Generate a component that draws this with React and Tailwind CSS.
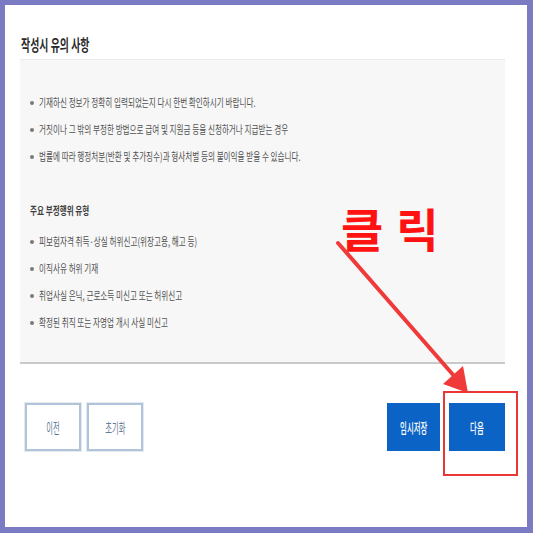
const font = { fontFamily: '"Noto Sans CJK KR", "Noto Sans", sans-serif' };

const notices = [
  '기재하신 정보가 정확히 입력되었는지 다시 한번 확인하시기 바랍니다.',
  '거짓이나 그 밖의 부정한 방법으로 급여 및 지원금 등을 신청하거나 지급받는 경우',
  '법률에 따라 행정처분(반환 및 추가징수)과 형사처벌 등의 불이익을 받을 수 있습니다.',
];

const types = [
  '피보험자격 취득·상실 허위신고(위장고용, 해고 등)',
  '이직사유 허위 기재',
  '취업사실 은닉, 근로소득 미신고 또는 허위신고',
  '확정된 취직 또는 자영업 개시 사실 미신고',
];

function Bullet({ text }) {
  return (
    <li className="flex h-[27px] items-center gap-[5px]">
      <span className="h-[4px] w-[4px] shrink-0 rounded-full bg-[#7a7a7a]" />
      <span className="inline-block origin-left scale-x-[0.69] whitespace-nowrap text-[11px] leading-none text-[#505050]">
        {text}
      </span>
    </li>
  );
}

function OutlineButton({ children }) {
  return (
    <button className="flex h-[48px] w-[56px] items-center justify-center border-2 border-[#b0c3d8] bg-white shadow-[0_0_0_1px_#e3eaf2]">
      <span className="inline-block scale-x-[0.52] text-[14px] text-[#667b98]">{children}</span>
    </button>
  );
}

function BlueButton({ children, w }) {
  return (
    <button className={`flex h-[48px] items-center justify-center bg-[#0b63c5] ${w}`}>
      <span className="inline-block scale-x-[0.53] text-[14px] font-medium text-white">{children}</span>
    </button>
  );
}

export default function App() {
  return (
    <div className="relative h-[533px] w-[533px] bg-[#7b7bc3] pb-[6px] pl-[5px] pr-[6px] pt-[5px]" style={font}>
      <div className="flex h-full w-full flex-col bg-white pl-[15px] pr-[22px]">
        {/* Title */}
        <div className="h-[54px] pl-[1px] pt-[27px]">
          <h1 className="inline-block origin-left scale-x-[0.64] whitespace-nowrap text-[15.5px] font-semibold leading-none text-[#2a2a2a]">
            작성시 유의 사항
          </h1>
        </div>

        {/* Notice panel */}
        <div className="border-b-2 border-t border-b-[#c9c9c9] border-t-[#ebebeb] bg-[#f7f7f7] pb-[26px] pl-[10px] pt-[29px]">
          <ul>
            {notices.map((t) => (
              <Bullet key={t} text={t} />
            ))}
          </ul>
          <div className="mt-[27px] flex h-[27px] items-center">
            <span className="inline-block origin-left scale-x-[0.69] whitespace-nowrap text-[11px] font-semibold leading-none text-[#3f3f3f]">
              주요 부정행위 유형
            </span>
          </div>
          <ul className="mt-[4px]">
            {types.map((t) => (
              <Bullet key={t} text={t} />
            ))}
          </ul>
        </div>

        {/* Buttons */}
        <div className="mt-[39px] flex items-center justify-between pl-[5px]">
          <div className="flex gap-[6px]">
            <OutlineButton>이전</OutlineButton>
            <OutlineButton>초기화</OutlineButton>
          </div>
          <div className="flex gap-[9px]">
            <BlueButton w="w-[53px]">임시저장</BlueButton>
            <BlueButton w="w-[56px]">다음</BlueButton>
          </div>
        </div>
      </div>

      {/* Annotation overlay */}
      <div className="pointer-events-none absolute left-[341px] top-[204px] whitespace-nowrap text-[46px] font-bold leading-none tracking-[0.28em] text-[#ff1212]">
        클릭
      </div>
      <svg className="pointer-events-none absolute left-0 top-0" width="533" height="533" viewBox="0 0 533 533">
        <line x1="338" y1="243" x2="455" y2="377" stroke="#f03a3a" strokeWidth="4" strokeLinecap="round" />
        <polygon points="468,393 463,366 443,384" fill="#f03a3a" />
      </svg>
      <div className="pointer-events-none absolute left-[443px] top-[391px] h-[85px] w-[75px] border-2 border-[#ea3636]" />
    </div>
  );
}
